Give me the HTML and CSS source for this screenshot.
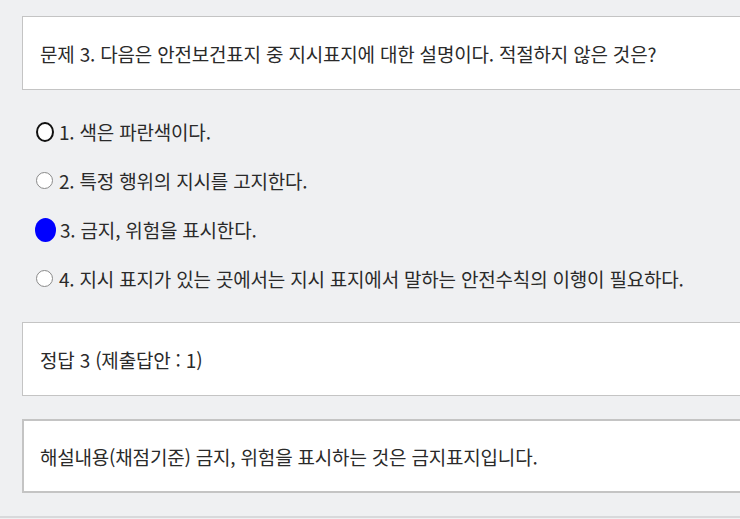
FILE: index.html
```html
<!DOCTYPE html>
<html lang="ko">
<head>
<meta charset="utf-8">
<link rel="stylesheet" href="styles.css">
</head>
<body>
<div class="page">
  <div class="box q">문제 3. 다음은 안전보건표지 중 지시표지에 대한 설명이다. 적절하지 않은 것은?</div>
  <ul class="opts">
    <li class="opt"><span class="radio r-focus"></span><span>1. 색은 파란색이다.</span></li>
    <li class="opt"><span class="radio"></span><span>2. 특정 행위의 지시를 고지한다.</span></li>
    <li class="opt"><span class="radio r-on"></span><span>3. 금지, 위험을 표시한다.</span></li>
    <li class="opt"><span class="radio"></span><span>4. 지시 표지가 있는 곳에서는 지시 표지에서 말하는 안전수칙의 이행이 필요하다.</span></li>
  </ul>
  <div class="box ans">정답 3 (제출답안 : 1)</div>
  <div class="box exp">해설내용(채점기준) 금지, 위험을 표시하는 것은 금지표지입니다.</div>
</div>
<div class="rule"></div>
</body>
</html>
```

FILE: styles.css
```css
html, body {
  margin: 0;
  padding: 0;
  background: #eff0f2;
  overflow: hidden;
}
body {
  width: 740px;
  height: 519px;
  font-family: "Noto Sans CJK KR", "Noto Sans", sans-serif;
  color: #2a2a2a;
}
.page {
  padding: 16px 0 0 22px;
  display: flex;
  flex-direction: column;
}
.box {
  box-sizing: border-box;
  width: 740px;
  height: 74px;
  background: #fff;
  border: 1px solid #c4c4c4;
  display: flex;
  align-items: center;
  padding-left: 17px;
  font-size: 19px;
  letter-spacing: -0.2px;
}
.opts {
  list-style: none;
  margin: 17px 0 0 0;
  padding: 0;
}
.opt {
  height: 49px;
  display: flex;
  align-items: center;
  font-size: 19px;
  letter-spacing: -0.2px;
}
.radio {
  box-sizing: border-box;
  width: 17px;
  height: 17px;
  border-radius: 50%;
  border: 1px solid #8a8a8a;
  background: #fff;
  margin: 0 6px 0 14px;
  flex: none;
}
.r-focus {
  width: 18px;
  height: 20px;
  border: 2px solid #111;
  margin-right: 5px;
}
.r-on {
  width: 21px;
  height: 24px;
  border: none;
  background: #0000ff;
  margin: 0 4px 0 13px;
}
.ans {
  margin-top: 19px;
}
.exp {
  margin-top: 23px;
  border-width: 2px 1px 2px 2px;
  padding-left: 16px;
}
.rule {
  margin-top: 23px;
  height: 2px;
  background: #d8d9db;
}
```
